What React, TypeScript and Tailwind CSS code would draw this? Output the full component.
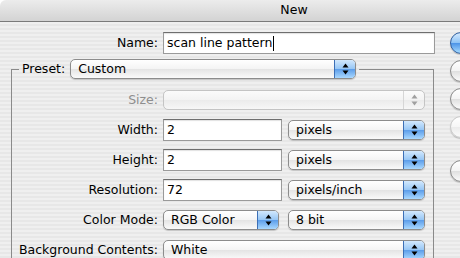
import React from "react";

const FONT = "font-['DejaVu_Sans',sans-serif]";

function Arrows({ disabled }: { disabled?: boolean }) {
  const c = disabled ? "#a0a0a0" : "#000000";
  return (
    <svg width="7" height="12" viewBox="0 0 7 12">
      <polygon points="3.5,0.5 6.5,4.5 0.5,4.5" fill={c} />
      <polygon points="0.5,7.5 6.5,7.5 3.5,11.5" fill={c} />
    </svg>
  );
}

function Popup({ text, className, disabled }: { text: string; className: string; disabled?: boolean }) {
  return (
    <div
      className={`flex h-[20px] shrink-0 items-stretch overflow-hidden rounded-[5px] border ${
        disabled
          ? "border-[#c4c4c4] bg-[linear-gradient(#fbfbfb,#f3f3f3_50%,#ebebeb_51%,#f7f7f7)]"
          : "border-[#8c8c8c] bg-[linear-gradient(#ffffff,#f4f4f4_50%,#e4e4e4_51%,#fafafa)] shadow-[0_1px_1px_rgba(0,0,0,0.18)]"
      } ${className}`}
    >
      <div className="flex flex-1 items-center pl-[7px] text-[12.5px] leading-none text-black">{text}</div>
      <div
        className={`flex w-[21px] items-center justify-center ${
          disabled
            ? "border-l border-[#d6d6d6]"
            : "border-l border-[#3c6fb6] bg-[linear-gradient(#d2e8fd,#96c6f5_50%,#5d9eea_52%,#a9d8ff)]"
        }`}
      >
        <Arrows disabled={disabled} />
      </div>
    </div>
  );
}

function Field({ value, className, caret }: { value: string; className: string; caret?: boolean }) {
  return (
    <div
      className={`flex h-[22px] shrink-0 items-center border border-[#9a9a9a] border-t-[#6e6e6e] bg-white pl-[3px] text-[12.5px] leading-none text-black shadow-[inset_0_1px_1px_rgba(0,0,0,0.12)] ${className}`}
    >
      <span>{value}</span>
      {caret && <span className="ml-[1px] h-[15px] w-[1px] bg-black" />}
    </div>
  );
}

function Row({ label, dim, children }: { label: string; dim?: boolean; children: React.ReactNode }) {
  return (
    <div className="flex h-[22px] items-center">
      <div className={`w-[146px] shrink-0 text-right text-[12.5px] ${dim ? "text-[#8e8e8e]" : "text-black"}`}>{label}</div>
      <div className="ml-[5px] flex items-center">{children}</div>
    </div>
  );
}

function AquaButton({ blue, disabled, className }: { blue?: boolean; disabled?: boolean; className?: string }) {
  return (
    <div
      className={`h-[22px] w-[100px] shrink-0 rounded-full border ${
        blue
          ? "border-[#2f5e9e] bg-[linear-gradient(#d6ebff,#8cc2f5_50%,#4e95e8_52%,#a8dcff)]"
          : disabled
          ? "border-[#c8c8c8] bg-[linear-gradient(#ffffff,#f6f6f6_50%,#ececec_52%,#fafafa)]"
          : "border-[#8a8a8a] bg-[linear-gradient(#ffffff,#f3f3f3_50%,#e0e0e0_52%,#fbfbfb)]"
      } shadow-[0_1px_1px_rgba(0,0,0,0.2)] ${className ?? ""}`}
    />
  );
}

export default function App() {
  return (
    <div className={`h-[258px] w-[460px] overflow-hidden ${FONT}`}>
      <div className="w-[588px]">
        <div className="flex h-[22px] items-center justify-center rounded-tl-[6px] border-b border-[#7a7a7a] bg-[linear-gradient(#ececec,#d3d3d3)] text-[12.5px] text-black">
          New
        </div>
        <div className="flex h-[236px] bg-[repeating-linear-gradient(to_bottom,#efefef_0px,#efefef_2px,#e7e7e7_2px,#e7e7e7_4px)]">
          <div className="w-[450px] shrink-0">
            <div className="mt-[10px] flex h-[22px] items-center">
              <div className="w-[158px] shrink-0 text-right text-[12.5px] text-black">Name:</div>
              <Field value="scan line pattern" caret className="ml-[5px] w-[272px]" />
            </div>
            <fieldset className="ml-[11px] mt-[5px] w-[423px] border border-[#8a8a8a] px-0 pb-[10px] pt-[10px]">
              <legend className="ml-[7px] px-[3px]">
                <div className="flex items-center">
                  <span className="text-[12.5px] text-black">Preset:</span>
                  <Popup text="Custom" className="ml-[5px] w-[286px]" />
                </div>
              </legend>
              <div className="flex flex-col gap-[8px]">
                <Row label="Size:" dim>
                  <Popup text="" disabled className="w-[262px]" />
                </Row>
                <Row label="Width:">
                  <Field value="2" className="w-[119px]" />
                  <Popup text="pixels" className="ml-[6px] w-[137px]" />
                </Row>
                <Row label="Height:">
                  <Field value="2" className="w-[119px]" />
                  <Popup text="pixels" className="ml-[6px] w-[137px]" />
                </Row>
                <Row label="Resolution:">
                  <Field value="72" className="w-[119px]" />
                  <Popup text="pixels/inch" className="ml-[6px] w-[137px]" />
                </Row>
                <Row label="Color Mode:">
                  <Popup text="RGB Color" className="w-[116px]" />
                  <Popup text="8 bit" className="ml-[9px] w-[137px]" />
                </Row>
                <Row label="Background Contents:">
                  <Popup text="White" className="w-[262px]" />
                </Row>
              </div>
            </fieldset>
          </div>
          <div className="flex flex-col gap-[6px] pt-[10px]">
            <AquaButton blue />
            <AquaButton />
            <AquaButton />
            <AquaButton disabled />
            <AquaButton className="mt-[16px]" />
          </div>
        </div>
      </div>
    </div>
  );
}
